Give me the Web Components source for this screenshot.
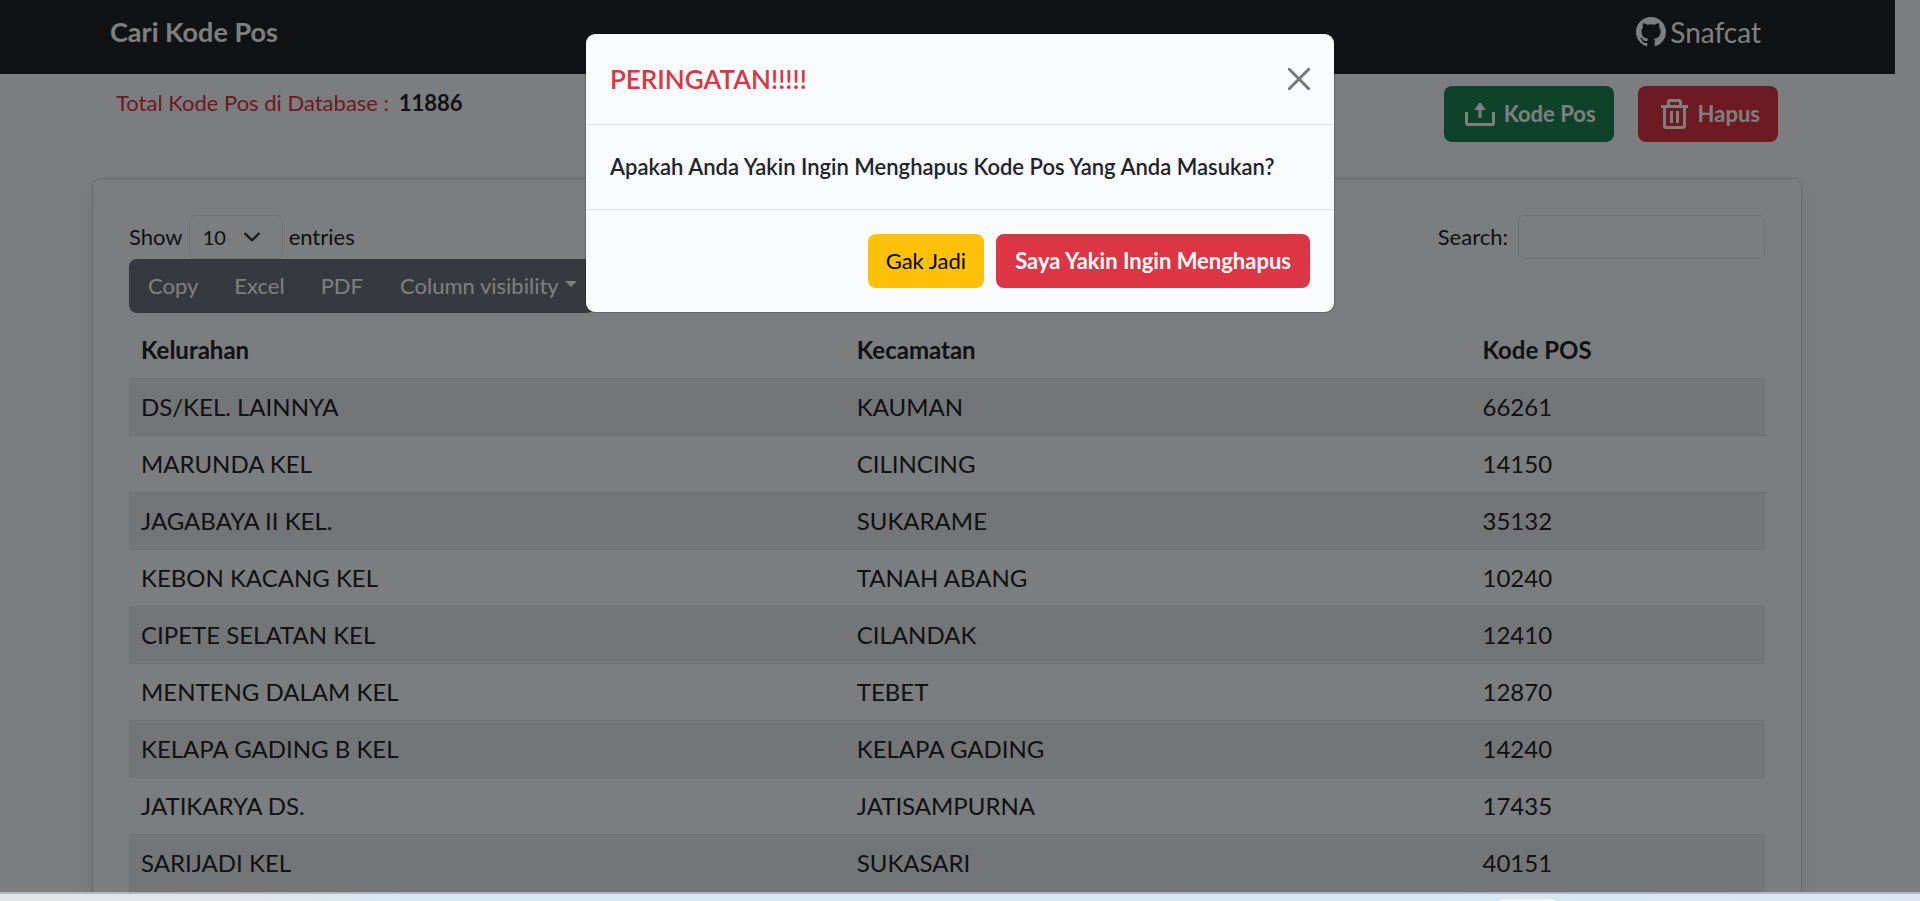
<!DOCTYPE html>
<html lang="id">
<head>
<meta charset="utf-8">
<title>Cari Kode Pos</title>
<style>
  html, body { margin: 0; height: 100%; }
  body {
    font: 400 22px/36px Lato, "Open Sans", sans-serif;
    color: #212529;
    background: #f8fafc;
    overflow: hidden;
  }
</style>
</head>
<body>
<app-shell>
  <site-nav slot="page" brand="Cari Kode Pos" user="Snafcat"></site-nav>
  <page-actions slot="page" total="11886"></page-actions>
  <data-card slot="page">
    <table-controls></table-controls>
    <export-toolbar></export-toolbar>
    <postcode-table></postcode-table>
  </data-card>
  <confirm-dialog slot="overlay">
    <span slot="title">PERINGATAN!!!!!</span>
    Apakah Anda Yakin Ingin Menghapus Kode Pos Yang Anda Masukan?
    <action-button slot="actions" kind="warning">Gak Jadi</action-button>
    <action-button slot="actions" kind="danger" strong>Saya Yakin Ingin Menghapus</action-button>
  </confirm-dialog>
</app-shell>

<script>
const define = (name, html, setup) => {
  const template = document.createElement('template');
  template.innerHTML = '<style>*{box-sizing:border-box}</style>' + html;
  customElements.define(name, class extends HTMLElement {
    constructor() {
      super();
      this.attachShadow({ mode: 'open' }).append(template.content.cloneNode(true));
    }
    connectedCallback() {
      if (setup && !this.ready) { this.ready = true; setup(this, this.shadowRoot); }
    }
  });
};

define('app-shell', `
  <style>
    :host { display: flex; flex-direction: column; height: 100vh; }
    .view { flex: 1; min-height: 0; position: relative; overflow: hidden; padding-right: 25px; }
    footer {
      position: relative; flex: none; height: 9px; border-top: 2px solid #b0b9bd;
      background: linear-gradient(90deg, #dfe6e6, #e0e5ec 12%, #d5e9f1 22%, #d6e9f2 75%, #dbe6f0);
      display: flex; justify-content: flex-end; align-items: flex-end; overflow: hidden; padding-right: 19%;
    }
    footer i { width: 55px; height: 2px; border-radius: 3px 3px 0 0; background: #eef6fa; }
  </style>
  <div class="view"><slot name="page"></slot><slot name="overlay"></slot></div>
  <footer><i></i></footer>`);

define('site-nav', `
  <style>
    :host { display: block; background: #212529; }
    nav { display: flex; justify-content: space-between; align-items: center; height: 74px; padding: 0 134px 11px 110px; }
    a { color: #fff; text-decoration: none; }
    .brand { font-size: 27px; font-weight: 700; }
    .user { display: flex; align-items: center; gap: 4px; font-size: 28px; }
    svg { width: 30px; height: 30px; fill: currentColor; }
  </style>
  <nav>
    <a class="brand" href="#"></a>
    <a class="user" href="#"><svg viewBox="0 0 16 16" aria-hidden="true"><path d="M8 0C3.58 0 0 3.58 0 8c0 3.54 2.29 6.53 5.47 7.59.4.07.55-.17.55-.38 0-.19-.01-.82-.01-1.49-2.01.37-2.53-.49-2.69-.94-.09-.23-.48-.94-.82-1.13-.28-.15-.68-.52-.01-.53.63-.01 1.08.58 1.23.82.72 1.21 1.87.87 2.33.66.07-.52.28-.87.51-1.07-1.78-.2-3.64-.89-3.64-3.95 0-.87.31-1.59.82-2.15-.08-.2-.36-1.02.08-2.12 0 0 .67-.21 2.2.82.64-.18 1.32-.27 2-.27s1.36.09 2 .27c1.53-1.04 2.2-.82 2.2-.82.44 1.1.16 1.92.08 2.12.51.56.82 1.27.82 2.15 0 3.07-1.87 3.75-3.65 3.95.29.25.54.73.54 1.48 0 1.07-.01 1.93-.01 2.2 0 .21.15.46.55.38A8.01 8.01 0 0 0 16 8c0-4.42-3.58-8-8-8z"/></svg><span></span></a>
  </nav>`, (host, root) => {
  root.querySelector('.brand').textContent = host.getAttribute('brand');
  root.querySelector('.user span').textContent = host.getAttribute('user');
});

define('action-button', `
  <style>
    :host { display: block; --bg: #6c757d; --fg: #fff; }
    :host([kind=success]) { --bg: #198754; }
    :host([kind=danger]) { --bg: #dc3545; }
    :host([kind=warning]) { --bg: #ffc107; --fg: #000; }
    button {
      display: flex; align-items: center; gap: 6px; margin: 0; border: 0; border-radius: 8px;
      padding: 9px 18px; font: inherit; background: var(--bg); color: var(--fg); white-space: nowrap;
    }
    :host([strong]) button { font-weight: 700; padding: 9px 19px; }
    :host([icon]) button { padding: 10px 18px; }
  </style>
  <button type="button"><slot name="icon"></slot><slot></slot></button>`);

define('page-actions', `
  <style>
    :host { display: flex; justify-content: space-between; align-items: flex-start; padding: 12px 117px 36px 116px; }
    p { margin: 0; color: #dc3545; line-height: 34px; }
    b { color: #212529; margin-left: 4px; }
    div { display: flex; gap: 24px; }
    svg { display: block; width: 36px; height: 36px; fill: none; stroke: currentColor; stroke-width: 3; }
  </style>
  <p>Total Kode Pos di Database : <b></b></p>
  <div>
    <action-button kind="success" strong icon>
      <svg slot="icon" viewBox="0 0 36 36" aria-hidden="true"><path d="M4.500 16v11q0 1.500 1.500 1.500h24q1.500 0 1.500-1.500V16M18 22v-11"/><path d="M18 6l6 8H12z" fill="currentColor" stroke="none"/></svg>
      Kode Pos</action-button>
    <action-button kind="danger" strong icon>
      <svg slot="icon" viewBox="0 0 36 36" aria-hidden="true"><path d="M5 10.500h27M8.500 11v19q0 1.500 1.500 1.500h17q1.500 0 1.500-1.500V11M12.500 10V6q0-1.500 1.500-1.500h9q1.500 0 1.500 1.500v4M15.500 15v12M21.500 15v12"/></svg>
      Hapus</action-button>
  </div>`, (host, root) => { root.querySelector('b').textContent = host.getAttribute('total'); });

define('data-card', `
  <style>
    :host {
      display: block; margin: 0 93px 36px 92px; padding: 36px; border: 1px solid rgba(0,0,0,.18);
      border-radius: 9px; box-shadow: 0 9px 18px rgba(0,0,0,.08);
    }
  </style>
  <slot></slot>`);

define('table-controls', `
  <style>
    :host { display: flex; justify-content: space-between; }
    label { display: flex; align-items: center; gap: 6px; line-height: 34px; }
    label.search { gap: 10px; }
    .pick { display: grid; align-items: center; }
    .pick > * { grid-area: 1 / 1; }
    select, input {
      margin: 0; height: 44px; border: 1px solid #dee2e6; border-radius: 6px;
      background: transparent; color: inherit; font: inherit; font-size: 20px;
    }
    select { appearance: none; width: 94px; padding: 0 13px; }
    input { width: 247px; padding: 0 12px; }
    svg { justify-self: end; margin-right: 22px; width: 18px; height: 18px; fill: none; stroke: #343a40; stroke-width: 2; stroke-linecap: round; stroke-linejoin: round; pointer-events: none; }
  </style>
  <label>Show
    <span class="pick"><select><option>10</option><option>25</option><option>50</option><option>100</option></select>
      <svg viewBox="0 0 16 16" aria-hidden="true"><path d="m2 5 6 6 6-6"/></svg></span>
    entries</label>
  <label class="search">Search: <input type="search"></label>`);

define('export-toolbar', `
  <style>
    :host { display: flex; margin-bottom: 9px; }
    div { display: flex; border-radius: 8px; background: #6c757d; }
    button { display: flex; align-items: center; gap: 6px; margin: 0; border: 0; padding: 9px 18px; background: none; color: #fff; font: inherit; }
    button:first-child, button:last-child { padding-left: 19px; }
    i { border: 6px solid transparent; border-top-color: currentColor; border-bottom: 0; margin-bottom: 4px; }
  </style>
  <div role="group">
    <button type="button">Copy</button><button type="button">Excel</button><button type="button">PDF</button>
    <button type="button">Column visibility<i></i></button>
  </div>`);

const ROWS = [
  ['DS/KEL. LAINNYA', 'KAUMAN', '66261'],
  ['MARUNDA KEL', 'CILINCING', '14150'],
  ['JAGABAYA II KEL.', 'SUKARAME', '35132'],
  ['KEBON KACANG KEL', 'TANAH ABANG', '10240'],
  ['CIPETE SELATAN KEL', 'CILANDAK', '12410'],
  ['MENTENG DALAM KEL', 'TEBET', '12870'],
  ['KELAPA GADING B KEL', 'KELAPA GADING', '14240'],
  ['JATIKARYA DS.', 'JATISAMPURNA', '17435'],
  ['SARIJADI KEL', 'SUKASARI', '40151']
];
define('postcode-table', `
  <style>
    :host { display: block; }
    table { width: 100%; border-spacing: 0; table-layout: fixed; font-size: 24px; }
    th, td { height: 57px; padding: 0 12px; text-align: left; border-bottom: 1px solid #dee2e6; }
    th { font-weight: 700; }
    th:nth-child(1) { width: 43.75%; }
    th:nth-child(2) { width: 38.25%; }
    tbody tr:nth-child(odd) { background: rgba(0,0,0,.06); }
  </style>
  <table>
    <thead><tr><th scope="col">Kelurahan</th><th scope="col">Kecamatan</th><th scope="col">Kode POS</th></tr></thead>
    <tbody></tbody>
  </table>`, (host, root) => {
  const body = root.querySelector('tbody');
  for (const row of ROWS) {
    const tr = body.insertRow();
    for (const value of row) tr.insertCell().textContent = value;
  }
});

define('confirm-dialog', `
  <style>
    :host {
      position: absolute; inset: 0; display: flex; justify-content: center; align-items: flex-start;
      padding: 33px 24px; background: rgba(0,0,0,.5);
    }
    dialog {
      position: static; margin: 0; padding: 0; border: 1px solid rgba(0,0,0,.18); border-radius: 10px;
      width: 750px; max-width: 100%; background: #f8fafc; background-clip: padding-box; color: inherit; overflow: hidden;
    }
    header { display: flex; justify-content: space-between; align-items: center; padding: 24px; border-bottom: 1px solid #dee2e6; }
    h5 { margin: 0; font-size: 26px; line-height: 42px; font-weight: 600; color: #dc3545; }
    .close { display: block; margin: 0; border: 0; padding: 0; background: none; color: #777879; }
    svg { display: block; width: 22px; height: 22px; fill: none; stroke: currentColor; stroke-width: 3; stroke-linecap: round; }
    .body { padding: 24px; font-weight: 600; }
    footer { display: flex; justify-content: flex-end; gap: 12px; padding: 24px; border-top: 1px solid #dee2e6; }
  </style>
  <dialog open aria-labelledby="title">
    <header>
      <h5 id="title"><slot name="title"></slot></h5>
      <button class="close" type="button" aria-label="Close"><svg viewBox="0 0 22 22"><path d="M1 1l20 20M21 1L1 21"/></svg></button>
    </header>
    <div class="body"><slot></slot></div>
    <footer><slot name="actions"></slot></footer>
  </dialog>`);
</script>
</body>
</html>
